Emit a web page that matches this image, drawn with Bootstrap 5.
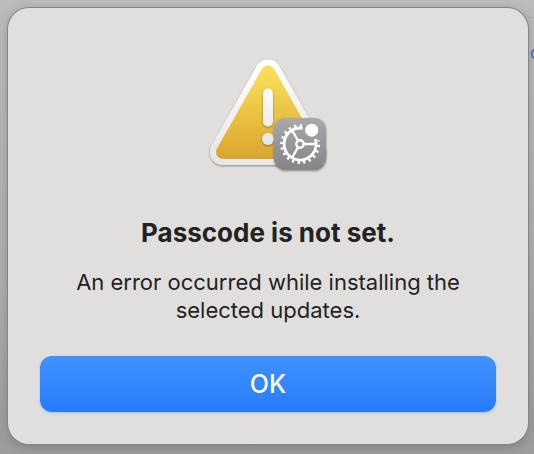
<!DOCTYPE html>
<html lang="en">
<head>
<meta charset="utf-8">
<meta name="viewport" content="width=device-width, initial-scale=1">
<title>Passcode is not set.</title>
<link href="https://cdn.jsdelivr.net/npm/bootstrap@5.3.0/dist/css/bootstrap.min.css" rel="stylesheet">
<style>
  body {
    font-family: Inter, "Liberation Sans", sans-serif;
    color: #232323;
    background: linear-gradient(#bcbcbc, #b0b0b0 60%, #9c9c9c) fixed;
    padding: 8px 6px 10px 8px;
  }
  .alert-panel {
    background: #e0dfde;
    border-radius: 21px;
    padding: 42px 32px 32px;
    box-shadow: 0 0 0 1px #858585, 0 2px 12px rgba(0, 0, 0, .22);
  }
  .alert-title { font-size: 26px; line-height: 30px; margin: 40px 0 20px; }
  .alert-text { font-size: 22px; line-height: 28px; max-width: 400px; margin: 0 0 32px; }
  .btn-ok {
    font-size: 25px;
    line-height: 32px;
    font-weight: 500;
    color: #fff;
    padding: 12px;
    border: 0;
    border-radius: 12px;
    background: linear-gradient(#4092fd, #287bfa);
    box-shadow: 0 1px 3px rgba(40, 120, 250, .3);
  }
  .btn-ok:hover { color: #fff; }
  .behind { top: 17px; right: 0; width: 6px; border-top: 1px solid #aaa; }
  .behind-link { font-size: 17px; line-height: 24px; font-weight: 500; color: #4f76b6; margin: 23px 0 0 2px; }
</style>
<script src="https://cdn.jsdelivr.net/npm/bootstrap@5.3.0/dist/js/bootstrap.bundle.min.js"></script>
</head>
<body class="min-vh-100 d-flex position-relative overflow-hidden">
  <div class="behind position-absolute overflow-hidden" aria-hidden="true">
    <div class="behind-link">o</div>
  </div>
  <main class="alert-panel position-relative flex-grow-1 d-flex flex-column align-items-center text-center" role="alertdialog" aria-labelledby="title" aria-describedby="message">
    <svg width="128" height="128" viewBox="204 50 128 128" aria-hidden="true">
      <defs>
        <linearGradient id="rim" gradientUnits="userSpaceOnUse" x1="0" y1="59" x2="0" y2="165"><stop stop-color="#fff"/><stop offset="1" stop-color="#e6e6e6"/></linearGradient>
        <linearGradient id="gold" gradientUnits="userSpaceOnUse" x1="0" y1="65" x2="0" y2="159"><stop stop-color="#fae35b"/><stop offset="1" stop-color="#dba52f"/></linearGradient>
        <linearGradient id="bang" gradientUnits="userSpaceOnUse" x1="0" y1="88" x2="0" y2="145"><stop stop-color="#fbfbfb"/><stop offset="1" stop-color="#e6e6e6"/></linearGradient>
        <linearGradient id="steel" x1="0" y1="0" x2="0" y2="1"><stop stop-color="#a9a9ab"/><stop offset="1" stop-color="#858589"/></linearGradient>
        <filter id="soft" x="-20%" y="-20%" width="140%" height="140%"><feDropShadow dx="0" dy="1" stdDeviation="1" flood-opacity=".4"/></filter>
      </defs>
      <path d="M268 72.500L313 152H223Z" fill="url(#rim)" stroke="url(#rim)" stroke-width="26" stroke-linejoin="round" filter="url(#soft)"/>
      <path d="M268 72.500L313 152H223Z" fill="url(#gold)" stroke="url(#gold)" stroke-width="14" stroke-linejoin="round"/>
      <g fill="url(#bang)" filter="url(#soft)">
        <rect x="263" y="88.500" width="10" height="38" rx="5"/>
        <circle cx="268" cy="139" r="5.900"/>
      </g>
      <rect x="274" y="118" width="52" height="52" rx="11.500" fill="url(#steel)" filter="url(#soft)"/>
      <g fill="none" stroke="#fff">
        <path d="M302.500 128.200A16 16 0 1 0 315.300 139" stroke-width="2.800"/>
        <path d="M302 126A18.200 18.200 0 1 0 318 140.500" stroke-width="3.600" stroke-dasharray="2.200 3.400"/>
        <circle cx="300" cy="144" r="3.700" stroke-width="2.400"/>
        <path d="M304 144H316M298 140.500L292 130.300M298 147.500L292 157.700" stroke-width="2.400"/>
      </g>
      <circle cx="311.700" cy="130.200" r="6.500" fill="#fff"/>
    </svg>
    <h1 id="title" class="alert-title fw-bold">Passcode is not set.</h1>
    <p id="message" class="alert-text">An error occurred while installing the selected updates.</p>
    <button type="button" class="btn btn-ok w-100">OK</button>
  </main>
</body>
</html>
